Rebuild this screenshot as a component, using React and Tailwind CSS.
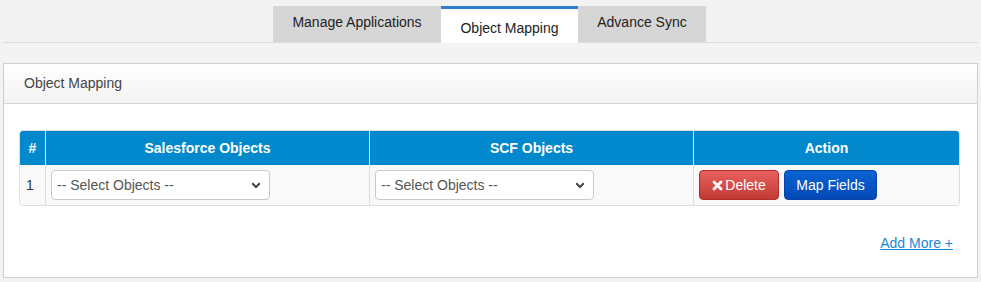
import React from 'react';

const Chevron = () => (
  <svg width="10" height="7" viewBox="0 0 10 7" className="pointer-events-none absolute right-[9px] top-[12px]">
    <path d="M1.2 1.2 L5 5 L8.8 1.2" fill="none" stroke="#444" strokeWidth="2" />
  </svg>
);

const SelectBox = () => (
  <div className="relative w-[219px]">
    <select className="h-[30px] w-full appearance-none rounded-[4px] border border-[#c8c8c8] bg-white pl-[5px] text-[14px] text-[#555] outline-none">
      <option>-- Select Objects --</option>
    </select>
    <Chevron />
  </div>
);

const tabs = [
  { name: 'Manage Applications', active: false, w: 'w-[168px]' },
  { name: 'Object Mapping', active: true, w: 'w-[137px]' },
  { name: 'Advance Sync', active: false, w: 'w-[128px]' },
];

export default function App() {
  return (
    <div className="h-[282px] w-[981px] bg-[#f3f3f3] font-['Liberation_Sans',Arial,sans-serif] text-[14px] text-[#333]">
      {/* Tabs */}
      <div className="mx-[3px] flex justify-center border-b border-[#dcdcdc] pr-[2px] pt-[6px]">
        {tabs.map((t) =>
          t.active ? (
            <div
              key={t.name}
              className={`${t.w} -mb-px flex h-[37px] items-center justify-center border-t-[3px] border-[#2f7dcc] bg-white pt-[4px] text-[#222]`}
            >
              {t.name}
            </div>
          ) : (
            <div key={t.name} className={`${t.w} flex h-[36px] items-center justify-center bg-[#d6d6d6] pb-[3px] text-[#222]`}>
              {t.name}
            </div>
          )
        )}
      </div>

      {/* Panel */}
      <div className="mx-[3px] mt-[20px] h-[215px] border border-[#cfcfcf] bg-white">
        <div className="flex h-[40px] items-center border-b border-[#d6d6d6] bg-gradient-to-b from-white to-[#f3f3f3] pl-[20px] text-[#444]">
          Object Mapping
        </div>

        <div className="pl-[15px] pr-[17px] pt-[26px]">
          <table className="w-full border-separate border-spacing-0 overflow-hidden rounded-[4px] border border-[#ddd]">
            <thead>
              <tr className="bg-[#0288cc] text-white">
                <th className="h-[34px] w-[26px] border-r border-[#e5e5e5] text-center font-bold">#</th>
                <th className="w-[324px] border-r border-[#e5e5e5] text-center font-bold">Salesforce Objects</th>
                <th className="w-[324px] border-r border-[#e5e5e5] text-center font-bold">SCF Objects</th>
                <th className="text-center font-bold">Action</th>
              </tr>
            </thead>
            <tbody>
              <tr className="bg-[#f9f9f9]">
                <td className="h-[40px] border-r border-[#ddd] pl-[6px]">1</td>
                <td className="border-r border-[#ddd] px-[5px]">
                  <SelectBox />
                </td>
                <td className="border-r border-[#ddd] px-[5px]">
                  <SelectBox />
                </td>
                <td className="px-[5px]">
                  <div className="flex gap-[5px]">
                    <button className="flex h-[30px] w-[80px] items-center justify-center gap-[2px] rounded-[4px] border border-[#b52b27] bg-gradient-to-b from-[#e8615d] to-[#c33a35] text-white">
                      <svg width="11" height="11" viewBox="0 0 11 11">
                        <path d="M2 2 L9 9 M9 2 L2 9" stroke="white" strokeWidth="2.8" strokeLinecap="round" />
                      </svg>
                      Delete
                    </button>
                    <button className="h-[30px] w-[93px] rounded-[4px] border border-[#0545a8] bg-gradient-to-b from-[#0a63d2] to-[#0449b8] text-white">
                      Map Fields
                    </button>
                  </div>
                </td>
              </tr>
            </tbody>
          </table>

          <div className="flex justify-end pr-[7px] pt-[27px]">
            <a href="#" className="text-[#1a88d6] underline">
              Add More +
            </a>
          </div>
        </div>
      </div>
    </div>
  );
}
